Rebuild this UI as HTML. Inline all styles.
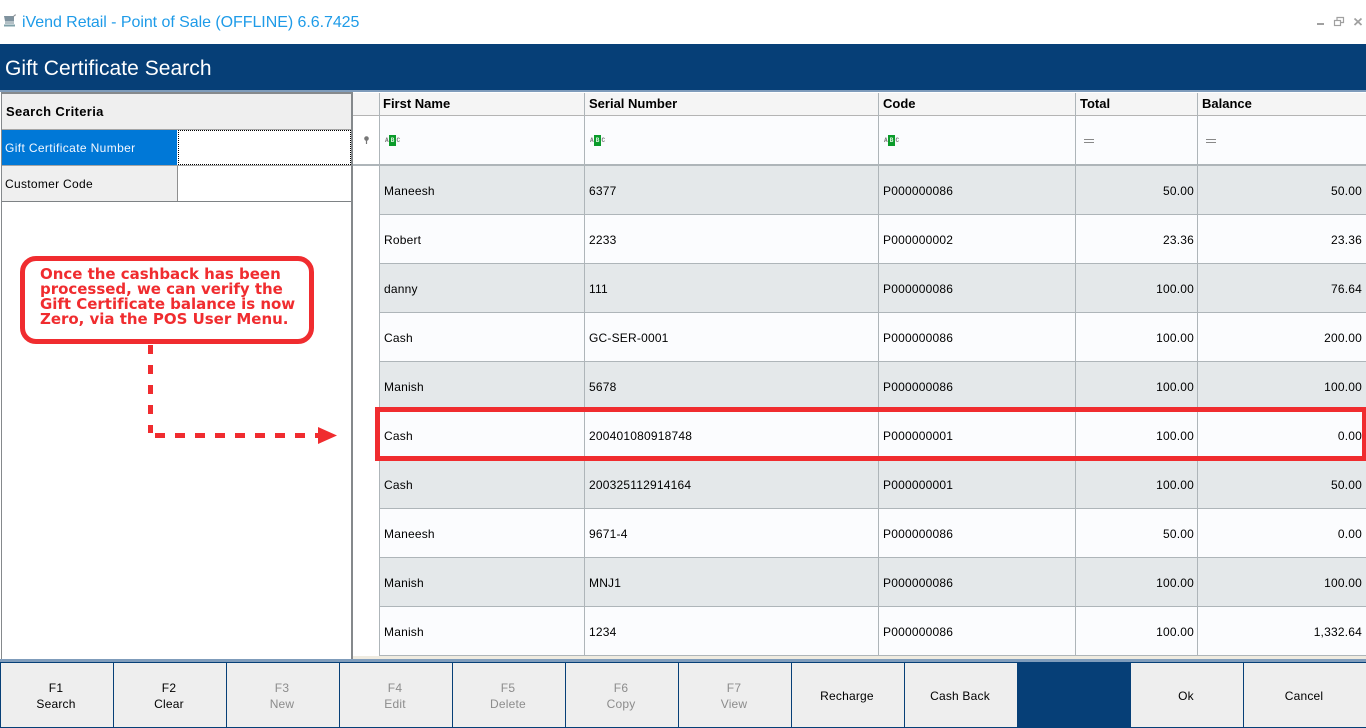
<!DOCTYPE html>
<html><head><meta charset="utf-8"><style>
html,body{margin:0;padding:0;background:#fff}
body{position:relative;width:1366px;height:728px;overflow:hidden;font-family:"Liberation Sans",sans-serif;font-size:12px;color:#000}
div{position:absolute;box-sizing:border-box;white-space:nowrap}
.r{left:379px;width:987px;height:49px;border-bottom:1px solid #aeb5b9}
.o{background:#e4e8ea}.e{background:#fbfcfe}
.t{top:18px;line-height:14px;letter-spacing:.2px}
.n{text-align:right;width:110px}
.h{top:96px;font-weight:bold;line-height:15px;font-size:13px}
.b{top:663px;height:64px;background:#eee;width:112px;text-align:center;line-height:16px;padding:17px 2px 0 0;letter-spacing:.2px}
.d{color:#8c8c8c}
.s{padding-top:25px}
.abc{top:135px;width:16px;height:11px;font:6px/11px "Liberation Mono",monospace;color:#777}
.abc i{position:absolute;left:4px;top:0;width:7px;height:11px;background:#0a9b2a;color:#e8f8ea;font-style:normal;font-weight:bold;line-height:11px;text-align:center}
.abc b{position:absolute;top:0;font-weight:bold}
.eq{top:139px;width:10px;height:4px;border-top:1px solid #888;border-bottom:1px solid #888}
</style></head><body>

<svg style="position:absolute;left:3px;top:14px" width="14" height="14" viewBox="0 0 14 14"><path d="M1 2h10v5H2z" fill="#7f929e"/><path d="M2 7h9v3H2z" fill="#b3c0c6"/><path d="M10 3l2-2h1" stroke="#8a8f94" stroke-width="1" fill="none"/><path d="M1 11.500h11" stroke="#7fa0a8" stroke-width="2"/></svg>
<div style="left:22px;top:12px;font-size:16px;line-height:21px;color:#1e9be8;letter-spacing:-.05px">iVend Retail - Point of Sale (OFFLINE) 6.6.7425</div>

<svg style="position:absolute;left:1315px;top:15px" width="51" height="14" viewBox="0 0 51 14" fill="none" stroke="#a0a0a0"><path d="M2 9h7" stroke-width="2"/><path d="M22 5V2.500h6.500v5H26" stroke-width="1.200"/><rect x="19.500" y="5.500" width="6" height="5" stroke-width="1.200"/><path d="M39.500 3.500l7 6.500M46.500 3.500l-7 6.500" stroke-width="1.800"/></svg>

<div style="left:0;top:44px;width:1366px;height:46px;background:#063f77"></div>
<div style="left:0;top:90px;width:1366px;height:2px;background:#7f9cbb"></div>
<div style="left:5px;top:55px;font-size:21px;line-height:27px;color:#fff;letter-spacing:.05px">Gift Certificate Search</div>

<div style="left:1px;top:92px;width:352px;height:568px;background:#fff;border:1px solid #85898c;border-top-width:2px;border-right-width:2px"></div>
<div style="left:2px;top:94px;width:349px;height:36px;background:#efefef;border-bottom:1px solid #a5a5a5"></div>
<div style="left:6px;top:104px;font-weight:bold;font-size:13px;line-height:15px;letter-spacing:.35px">Search Criteria</div>
<div style="left:2px;top:130px;width:175px;height:35px;background:#0078d7"></div>
<div style="left:5px;top:141px;color:#f4f8ff;line-height:15px;letter-spacing:.37px">Gift Certificate Number</div>
<div style="left:178px;top:130px;width:173px;height:35px;border:1px dotted #000"></div>
<div style="left:2px;top:166px;width:175px;height:35px;background:#efefef"></div>
<div style="left:5px;top:177px;line-height:15px;letter-spacing:.3px">Customer Code</div>
<div style="left:177px;top:166px;width:1px;height:35px;background:#8f8f8f"></div>
<div style="left:2px;top:165px;width:349px;height:1px;background:#a5a5a5"></div>
<div style="left:2px;top:201px;width:349px;height:1px;background:#7e8285"></div>

<div style="left:353px;top:92px;width:1013px;height:567px;background:#fff"></div>
<div style="left:353px;top:93px;width:1013px;height:23px;background:#f5f5f5;border-bottom:1px solid #b4b4b4"></div>
<div style="left:353px;top:116px;width:1013px;height:50px;background:#fff;border-bottom:2px solid #aeb5b9"></div>
<div style="left:379px;top:116px;width:987px;height:48px;background:#fbfcfe"></div>

<div class="h" style="left:383px">First Name</div>
<div class="h" style="left:589px">Serial Number</div>
<div class="h" style="left:883px">Code</div>
<div class="h" style="left:1080px">Total</div>
<div class="h" style="left:1202px">Balance</div>

<svg style="position:absolute;left:363px;top:136px" width="7" height="9" viewBox="0 0 7 9"><circle cx="3.500" cy="2.500" r="2.300" fill="#777"/><path d="M3.500 4v4" stroke="#777" stroke-width="1.200"/></svg>
<div class="abc" style="left:385px"><b style="left:0">A</b><i>B</i><b style="left:11.500px">C</b></div>
<div class="abc" style="left:590px"><b style="left:0">A</b><i>B</i><b style="left:11.500px">C</b></div>
<div class="abc" style="left:884px"><b style="left:0">A</b><i>B</i><b style="left:11.500px">C</b></div>
<div class="eq" style="left:1084px"></div>
<div class="eq" style="left:1206px"></div>

<div class="r o" style="top:166px"><div class="t" style="left:5px">Maneesh</div><div class="t" style="left:210px">6377</div><div class="t" style="left:504px">P000000086</div><div class="t n" style="left:705px">50.00</div><div class="t n" style="left:873px">50.00</div></div>
<div class="r e" style="top:215px"><div class="t" style="left:5px">Robert</div><div class="t" style="left:210px">2233</div><div class="t" style="left:504px">P000000002</div><div class="t n" style="left:705px">23.36</div><div class="t n" style="left:873px">23.36</div></div>
<div class="r o" style="top:264px"><div class="t" style="left:5px">danny</div><div class="t" style="left:210px">111</div><div class="t" style="left:504px">P000000086</div><div class="t n" style="left:705px">100.00</div><div class="t n" style="left:873px">76.64</div></div>
<div class="r e" style="top:313px"><div class="t" style="left:5px">Cash</div><div class="t" style="left:210px">GC-SER-0001</div><div class="t" style="left:504px">P000000086</div><div class="t n" style="left:705px">100.00</div><div class="t n" style="left:873px">200.00</div></div>
<div class="r o" style="top:362px"><div class="t" style="left:5px">Manish</div><div class="t" style="left:210px">5678</div><div class="t" style="left:504px">P000000086</div><div class="t n" style="left:705px">100.00</div><div class="t n" style="left:873px">100.00</div></div>
<div class="r e" style="top:411px"><div class="t" style="left:5px">Cash</div><div class="t" style="left:210px">200401080918748</div><div class="t" style="left:504px">P000000001</div><div class="t n" style="left:705px">100.00</div><div class="t n" style="left:873px">0.00</div></div>
<div class="r o" style="top:460px"><div class="t" style="left:5px">Cash</div><div class="t" style="left:210px">200325112914164</div><div class="t" style="left:504px">P000000001</div><div class="t n" style="left:705px">100.00</div><div class="t n" style="left:873px">50.00</div></div>
<div class="r e" style="top:509px"><div class="t" style="left:5px">Maneesh</div><div class="t" style="left:210px">9671-4</div><div class="t" style="left:504px">P000000086</div><div class="t n" style="left:705px">50.00</div><div class="t n" style="left:873px">0.00</div></div>
<div class="r o" style="top:558px"><div class="t" style="left:5px">Manish</div><div class="t" style="left:210px">MNJ1</div><div class="t" style="left:504px">P000000086</div><div class="t n" style="left:705px">100.00</div><div class="t n" style="left:873px">100.00</div></div>
<div class="r e" style="top:607px"><div class="t" style="left:5px">Manish</div><div class="t" style="left:210px">1234</div><div class="t" style="left:504px">P000000086</div><div class="t n" style="left:705px">100.00</div><div class="t n" style="left:873px">1,332.64</div></div>

<div style="left:379px;top:93px;width:1px;height:563px;background:#aeb5b9"></div>
<div style="left:584px;top:93px;width:1px;height:563px;background:#aeb5b9"></div>
<div style="left:878px;top:93px;width:1px;height:563px;background:#aeb5b9"></div>
<div style="left:1075px;top:93px;width:1px;height:563px;background:#aeb5b9"></div>
<div style="left:1197px;top:93px;width:1px;height:563px;background:#aeb5b9"></div>
<div style="left:353px;top:656px;width:1013px;height:3px;background:#efebe0"></div>

<div style="left:0;top:659px;width:1366px;height:3px;background:#7f9cbb"></div>
<div style="left:0;top:662px;width:1366px;height:66px;background:#063f77"></div>
<div class="b" style="left:1px">F1<br>Search</div>
<div class="b" style="left:114px">F2<br>Clear</div>
<div class="b d" style="left:227px">F3<br>New</div>
<div class="b d" style="left:340px">F4<br>Edit</div>
<div class="b d" style="left:453px">F5<br>Delete</div>
<div class="b d" style="left:566px">F6<br>Copy</div>
<div class="b d" style="left:679px">F7<br>View</div>
<div class="b s" style="left:792px">Recharge</div>
<div class="b s" style="left:905px">Cash Back</div>
<div class="b s" style="left:1131px">Ok</div>
<div class="b s" style="left:1244px;width:122px">Cancel</div>

<div style="left:20px;top:256px;width:294px;height:88px;border:5px solid #f02c2f;border-radius:16px;background:#fff"></div>
<div style="left:40px;top:267px;font:bold 15px/15px 'DejaVu Sans',sans-serif;color:#f02c2f;letter-spacing:-.02px">Once the cashback has been<br>processed, we can verify the<br>Gift Certificate balance is now<br>Zero, via the POS User Menu.</div>
<svg style="position:absolute;left:140px;top:340px" width="205" height="110" viewBox="0 0 205 110" fill="none"><path d="M10.500 5V93" stroke="#f02c2f" stroke-width="5" stroke-dasharray="9 11"/><path d="M15 95.500H179" stroke="#f02c2f" stroke-width="5" stroke-dasharray="10 10"/><path d="M178 87L197 95.500 178 104z" fill="#f02c2f"/></svg>
<div style="left:375px;top:407px;width:991px;height:54px;border:5px solid #f02c2f;border-right-width:4px"></div>

</body></html>
